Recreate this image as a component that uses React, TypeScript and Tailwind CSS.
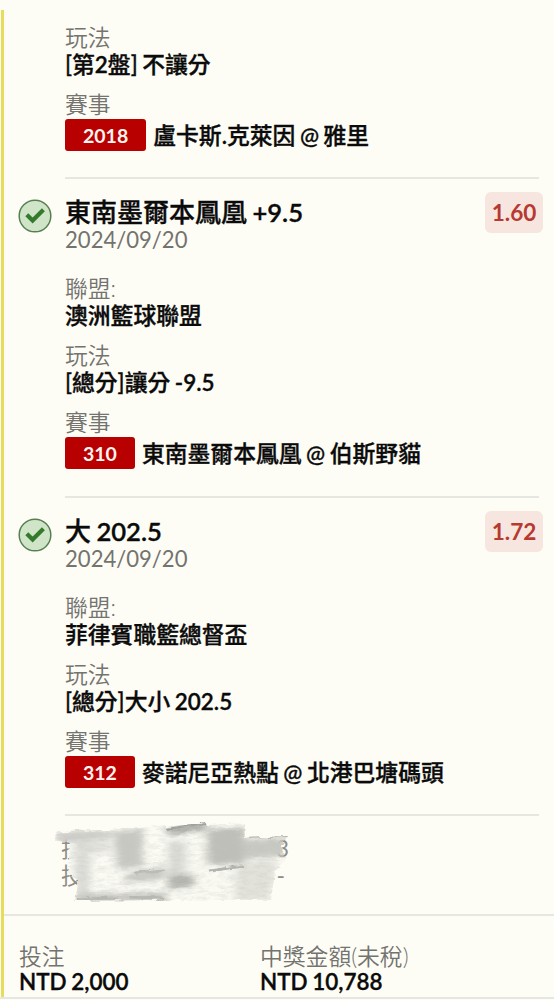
import React from "react";

type Bet = {
  pick?: string;
  date?: string;
  odds?: string;
  league?: string;
  play: string;
  code: string;
  match: string;
};

const bets: Bet[] = [
  { play: "[第2盤] 不讓分", code: "2018", match: "盧卡斯.克萊因 @ 雅里" },
  {
    pick: "東南墨爾本鳳凰 +9.5",
    date: "2024/09/20",
    odds: "1.60",
    league: "澳洲籃球聯盟",
    play: "[總分]讓分 -9.5",
    code: "310",
    match: "東南墨爾本鳳凰 @ 伯斯野貓",
  },
  {
    pick: "大 202.5",
    date: "2024/09/20",
    odds: "1.72",
    league: "菲律賓職籃總督盃",
    play: "[總分]大小 202.5",
    code: "312",
    match: "麥諾尼亞熱點 @ 北港巴塘碼頭",
  },
];

// Digits and Latin letters carry a heavier, slightly smaller face than the Han characters.
function Mixed({ text }: { text: string }) {
  const runs = text.split(/([A-Z0-9.,+-]+)/);
  return (
    <>
      {runs.map((run, i) =>
        i % 2 ? (
          <span key={i} className="text-[0.985em] font-semibold">
            {run}
          </span>
        ) : (
          run
        ),
      )}
    </>
  );
}

function CheckBadge() {
  return (
    <svg className="mt-[20px] h-[34px] w-[34px] shrink-0" viewBox="0 0 34 34" fill="none">
      <circle cx="17" cy="17" r="15.8" fill="#d0e5c8" stroke="#568052" strokeWidth="1.5" />
      <path d="M8.8 15.8L14.6 21.5L25.4 10.8" stroke="#347a2c" strokeWidth="4.2" strokeLinejoin="miter" />
    </svg>
  );
}

function Label({ children }: { children: React.ReactNode }) {
  return <div className="h-[27px] font-[350] text-[#737370]">{children}</div>;
}

function Value({ text }: { text: string }) {
  return (
    <div className="h-[27px] font-medium text-[#0b0b0b] [-webkit-text-stroke:0.35px_#0b0b0b] [word-spacing:-1.2px]">
      <Mixed text={text} />
    </div>
  );
}

function BetItem({ bet }: { bet: Bet }) {
  const height = !bet.pick ? "h-[178px]" : bet.code === "310" ? "h-[319px]" : "h-[318px]";
  return (
    <section className={`flex pl-[14px] ${height}`}>
      <div className="flex w-[47px] shrink-0">{bet.pick && <CheckBadge />}</div>
      <div className="mr-[15px] flex grow flex-col border-b-2 border-[#e7e7e2]">
        {bet.pick && (
          <header className="mb-[22px] mt-[18px] flex justify-between">
            <div>
              <h2 className="h-[29px] text-[26px] font-medium leading-[30px] text-[#0b0b0b] [-webkit-text-stroke:0.35px_#0b0b0b] [word-spacing:-1.2px]">
                <Mixed text={bet.pick} />
              </h2>
              <div className="h-[27px] text-[22.1px] text-[#737370]">{bet.date}</div>
            </div>
            <div className="-mr-1 -mt-[5px] flex h-[41px] w-[58px] items-center justify-center rounded-[6px] bg-[#f6e6df] text-[22.6px] font-bold text-[#b63a31]">
              {bet.odds}
            </div>
          </header>
        )}
        <div className={bet.pick ? "flex flex-col gap-[13px]" : "mt-[23px] flex flex-col gap-[13px]"}>
          {bet.league && (
            <div>
              <Label>聯盟:</Label>
              <Value text={bet.league} />
            </div>
          )}
          <div>
            <Label>玩法</Label>
            <Value text={bet.play} />
          </div>
          <div>
            <Label>賽事</Label>
            <div className="mt-px flex h-8 items-center font-medium text-[#0b0b0b] [word-spacing:-1.2px]">
              <span className="mr-[7px] flex h-8 items-center rounded-[3px] bg-[#b80000] px-[18px] text-[19.5px] font-bold text-[#fff4ee]">
                {bet.code}
              </span>
              <span className="[-webkit-text-stroke:0.35px_#0b0b0b]">
                <Mixed text={bet.match} />
              </span>
            </div>
          </div>
        </div>
      </div>
    </section>
  );
}

function Scribble() {
  return (
    <svg className="absolute left-[44px] top-0 h-[96px] w-[254px]" viewBox="50 816 254 96">
      <defs>
        <filter id="rough" x="-5%" y="-10%" width="110%" height="120%">
          <feTurbulence type="fractalNoise" baseFrequency="0.08 0.35" numOctaves="2" seed="4" result="n" />
          <feDisplacementMap in="SourceGraphic" in2="n" scale="5" xChannelSelector="R" yChannelSelector="A" />
        </filter>
        <filter id="soft" x="-20%" y="-20%" width="140%" height="140%">
          <feGaussianBlur stdDeviation="4 2.5" />
        </filter>
        <filter id="grain" x="0" y="0" width="100%" height="100%">
          <feTurbulence type="fractalNoise" baseFrequency="0.1 0.35" numOctaves="3" seed="9" />
          <feColorMatrix values="0 0 0 0 0.55  0 0 0 0 0.55  0 0 0 0 0.53  1.5 0 0 0 -0.62" />
        </filter>
        <clipPath id="patch">
          <path d="M58 831L113 830L126 828L167 825L168 827L208 822L209 825L246 823L247 838L290 836L283 846L288 858L277 872L273 900L169 900L76 901L80 879L70 875L72 842L57 841Z" />
        </clipPath>
      </defs>
      <g filter="url(#rough)">
        <g clipPath="url(#patch)">
          <path d="M69 840L92 820H279V905H69Z" fill="#fafaf3" />
          <g filter="url(#soft)">
            <path d="M58 831L114 830V838L58 844Z" fill="#cecec9" />
            <path d="M77 842H92V900H77Z" fill="#dbdbd6" />
            <path d="M92 841H113V853H92Z" fill="#e2e2dc" />
            <path d="M116 832L145 828V866L119 870Z" fill="#c8c8c3" />
            <path d="M130 873L167 866V879L125 883Z" fill="#cacac5" />
            <path d="M169 827L208 822V830L170 836Z" fill="#a8a8a4" />
            <path d="M170 841H188V879H170Z" fill="#dadad4" />
            <path d="M170 876L196 874V886L171 890Z" fill="#b3b3ae" />
            <path d="M209 829L247 827V865L209 864Z" fill="#bfbfba" />
            <path d="M245 840L290 837V856L245 859Z" fill="#c9c9c3" />
            <path d="M238 863L280 860L273 900H236Z" fill="#e2e2db" />
            <path d="M76 894L169 892V902H76Z" fill="#c7c7c1" />
            <path d="M93 858H113V888H93Z" fill="#fbfbf4" />
            <path d="M148 832H167V860H148Z" fill="#fcfcf5" />
          </g>
          <path d="M78 899L120 898M131 897L165 898" stroke="#b8b8b3" strokeWidth="3" />
          <path d="M137 873L166 870" stroke="#bbbbb6" strokeWidth="3" />
          <path d="M169 829L208 823" stroke="#a1a19c" strokeWidth="2" />
          <path d="M211 871L245 866" stroke="#b3b3ae" strokeWidth="3" />
          <path d="M247 838L290 836" stroke="#b0b0ab" strokeWidth="2" />
          <rect x="50" y="816" width="254" height="96" filter="url(#grain)" opacity="0.45" />
        </g>
      </g>
    </svg>
  );
}

function ObscuredRows() {
  return (
    <section className="relative flex h-[98px] flex-col pl-[57px] pt-[19px]">
      <div className="flex h-[27px] w-[228px] justify-between text-[#8d8d89]">
        <span>投</span>
        <span>3</span>
      </div>
      <div className="flex h-[27px] w-[228px] justify-between text-[#8d8d89]">
        <span>投</span>
        <span className="mr-1">-</span>
      </div>
      <Scribble />
    </section>
  );
}

export default function App() {
  return (
    <main className="flex h-[1000px] w-[554px] flex-col overflow-hidden whitespace-nowrap bg-[#fefdf5] pt-px font-['Lato','Noto_Sans_CJK_TC',sans-serif] text-[22.8px] leading-[27px]">
      <div className="relative flex h-[998px] flex-col border-b-2 border-[#e7e7e2] pl-1">
        <span className="absolute left-px top-[9px] h-[987px] w-[3px] bg-[#e8dc5f]" />
        {bets.map((bet) => (
          <BetItem key={bet.code} bet={bet} />
        ))}
        <ObscuredRows />
        <footer className="flex grow border-t-2 border-[#e7e7e2] pl-[15px] pt-[27px]">
          <div className="w-[241px]">
            <Label>投注</Label>
            <div className="-mt-[2px]">
              <Value text="NTD 2,000" />
            </div>
          </div>
          <div>
            <Label>中獎金額(未稅)</Label>
            <div className="-mt-[2px]">
              <Value text="NTD 10,788" />
            </div>
          </div>
        </footer>
      </div>
    </main>
  );
}
